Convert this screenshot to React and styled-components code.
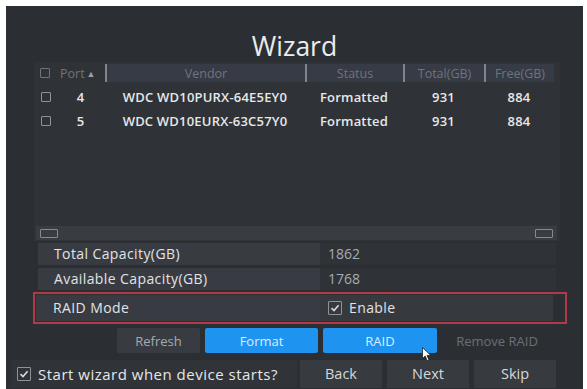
import React from 'react';
import styled, { createGlobalStyle } from 'styled-components';

const Global = createGlobalStyle`
  html, body { margin: 0; padding: 0; background: #ffffff; }
  body { font-family: "Open Sans", "Noto Sans", sans-serif; }
  * { box-sizing: border-box; }
`;

const Page = styled.div`
  width: 587px;
  height: 389px;
  padding: 6px 4px 0 6px;
  overflow: hidden;
`;

const Panel = styled.div`
  position: relative;
  height: 383px;
  background: #2b2f33;
  display: flex;
  flex-direction: column;
  color: #e4e6e8;
`;

const Title = styled.h1`
  margin: 24px 0 0;
  font-weight: 400;
  font-size: 26.5px;
  line-height: 32px;
  text-align: center;
  color: #ececec;
`;

const TableBox = styled.div`
  margin-left: 28px;
  width: 526px;
  height: 179px;
  background: #2f3337;
  display: flex;
  flex-direction: column;
  padding: 2px 2px 1px;
`;

const cols = '20px 49px 200px 98px 81px 70px';

const HeaderRow = styled.div`
  display: grid;
  grid-template-columns: ${cols};
  height: 18px;
`;

const HeaderCell = styled.div`
  display: flex;
  align-items: center;
  justify-content: ${(p) => (p.$left ? 'flex-start' : 'center')};
  padding-left: ${(p) => (p.$left ? '4px' : '0')};
  font-size: 12.5px;
  color: #6e747d;
  background: ${(p) => (p.$shaded ? '#363b46' : 'transparent')};
  border-left: ${(p) => (p.$sep ? '2px solid #80858c' : 'none')};
`;

const SortArrow = styled.span`
  font-size: 9px;
  margin-left: 2px;
  color: #9a9fa6;
`;

const DataRow = styled.div`
  display: grid;
  grid-template-columns: ${cols};
  height: 24px;
  margin-top: ${(p) => (p.$first ? '3px' : '0')};
`;

const DataCell = styled.div`
  display: flex;
  align-items: center;
  justify-content: center;
  font-size: 13px;
  font-weight: 600;
  letter-spacing: 0.2px;
  color: #e6e7e9;
  white-space: nowrap;
`;

const Scrollbar = styled.div`
  margin-top: auto;
  width: 521px;
  height: 14px;
  background: #393d43;
  display: flex;
  align-items: center;
  justify-content: space-between;
  padding: 0 4px 0 4px;
`;

const ScrollArrow = styled.span`
  width: 18px;
  height: 9px;
  border: 1.5px solid #878b91;
  border-radius: 1px;
`;

const Box = styled.span`
  display: inline-flex;
  align-items: center;
  justify-content: center;
  width: ${(p) => p.$size}px;
  height: ${(p) => p.$size}px;
  border: 1.5px solid ${(p) => p.$color || '#8f949a'};
  border-radius: 1px;
  flex: none;
`;

function Check({ size = 10, checked, color }) {
  return (
    <Box $size={size} $color={color}>
      {checked && (
        <svg width={size - 4} height={size - 4} viewBox="0 0 10 10">
          <path d="M1.5 5.2 L4 7.6 L8.6 2.2" fill="none" stroke="#d8dadc" strokeWidth="1.6" />
        </svg>
      )}
    </Box>
  );
}

const InfoRow = styled.div`
  margin: ${(p) => p.$mt}px 0 0 30px;
  width: 520px;
  height: 22px;
  display: grid;
  grid-template-columns: 284px 1fr;
`;

const Label = styled.div`
  background: #383c42;
  padding-left: 16px;
  font-size: 14px;
  letter-spacing: 0.4px;
  line-height: 22px;
  color: #e2e3e5;
  margin-left: 2px;
`;

const Value = styled.div`
  background: #2f3337;
  padding-left: 8px;
  font-size: 14px;
  line-height: 22px;
  color: #a7abb0;
  display: flex;
  align-items: center;
  gap: 7px;
`;

const RaidBox = styled.div`
  margin: 2px 0 0 27px;
  width: 534px;
  border: 2px solid #b03a45;
  padding: 1px 12px 1px 1px;
`;

const RaidRow = styled.div`
  height: 26px;
  display: grid;
  grid-template-columns: 284px 1fr;
`;

const RaidLabel = styled(Label)`
  line-height: 26px;
  margin-left: 0;
  padding-left: 17px;
`;

const RaidValue = styled(Value)`
  background: #363a3f;
  line-height: 26px;
  color: #e2e3e5;
  letter-spacing: 0.4px;
`;

const ButtonRow = styled.div`
  margin: 4px 0 0 111px;
  display: flex;
  gap: 5px;
  height: 25px;
`;

const Button = styled.div`
  width: ${(p) => p.$w}px;
  height: 100%;
  display: flex;
  align-items: center;
  justify-content: center;
  font-size: 13px;
  border-radius: 2px;
  background: ${(p) => (p.$kind === 'primary' ? '#1f93f0' : p.$kind === 'ghost' ? 'transparent' : '#383c42')};
  color: ${(p) => (p.$kind === 'primary' ? '#dcedff' : p.$kind === 'ghost' ? '#6b7076' : '#a6aaae')};
`;

const BottomRow = styled.div`
  margin-top: 7px;
  height: 28px;
  display: flex;
  align-items: stretch;
`;

const StartGroup = styled.div`
  margin-left: 5px;
  width: 286px;
  background: #303438;
  display: flex;
  align-items: center;
  gap: 7px;
  padding-left: 6px;
  font-size: 15px;
  letter-spacing: 0.5px;
  color: #e6e7e9;
`;

const NavGroup = styled.div`
  margin-left: 3px;
  display: flex;
  gap: 5px;
`;

const NavButton = styled.div`
  width: 82px;
  display: flex;
  align-items: center;
  justify-content: center;
  padding-bottom: 2px;
  background: #373b40;
  color: #d6d8da;
  font-size: 14.5px;
`;

const Cursor = styled.svg`
  position: absolute;
  left: 416px;
  top: 341px;
`;

const disks = [
  { port: 4, vendor: 'WDC WD10PURX-64E5EY0', status: 'Formatted', total: 931, free: 884 },
  { port: 5, vendor: 'WDC WD10EURX-63C57Y0', status: 'Formatted', total: 931, free: 884 },
];

export default function App() {
  return (
    <Page>
      <Global />
      <Panel>
        <Title>Wizard</Title>
        <TableBox>
          <HeaderRow>
            <HeaderCell $left><Check size={10} color="#6e747d" /></HeaderCell>
            <HeaderCell $left>Port<SortArrow>▲</SortArrow></HeaderCell>
            <HeaderCell $sep $shaded>Vendor</HeaderCell>
            <HeaderCell $sep $shaded>Status</HeaderCell>
            <HeaderCell $sep $shaded>Total(GB)</HeaderCell>
            <HeaderCell $sep $shaded>Free(GB)</HeaderCell>
          </HeaderRow>
          {disks.map((d, i) => (
            <DataRow key={d.port} $first={i === 0}>
              <DataCell><Check size={10} /></DataCell>
              <DataCell>{d.port}</DataCell>
              <DataCell>{d.vendor}</DataCell>
              <DataCell>{d.status}</DataCell>
              <DataCell>{d.total}</DataCell>
              <DataCell>{d.free}</DataCell>
            </DataRow>
          ))}
          <Scrollbar>
            <ScrollArrow />
            <ScrollArrow />
          </Scrollbar>
        </TableBox>
        <InfoRow $mt={2}>
          <Label>Total Capacity(GB)</Label>
          <Value>1862</Value>
        </InfoRow>
        <InfoRow $mt={3}>
          <Label>Available Capacity(GB)</Label>
          <Value>1768</Value>
        </InfoRow>
        <RaidBox>
          <RaidRow>
            <RaidLabel>RAID Mode</RaidLabel>
            <RaidValue><Check size={14} checked />Enable</RaidValue>
          </RaidRow>
        </RaidBox>
        <ButtonRow>
          <Button $w={83}>Refresh</Button>
          <Button $w={113} $kind="primary">Format</Button>
          <Button $w={114} $kind="primary">RAID</Button>
          <Button $w={110} $kind="ghost">Remove RAID</Button>
        </ButtonRow>
        <BottomRow>
          <StartGroup>
            <Check size={14} checked />
            Start wizard when device starts?
          </StartGroup>
          <NavGroup>
            <NavButton>Back</NavButton>
            <NavButton>Next</NavButton>
            <NavButton>Skip</NavButton>
          </NavGroup>
        </BottomRow>
        <Cursor width="11" height="15" viewBox="0 0 11 15">
          <path d="M0.5 0.5 L0.5 11.5 L3.2 9 L5.2 13.8 L7 13 L5 8.4 L8.8 8.4 Z" fill="#ffffff" stroke="#222" strokeWidth="0.8" />
        </Cursor>
      </Panel>
    </Page>
  );
}
